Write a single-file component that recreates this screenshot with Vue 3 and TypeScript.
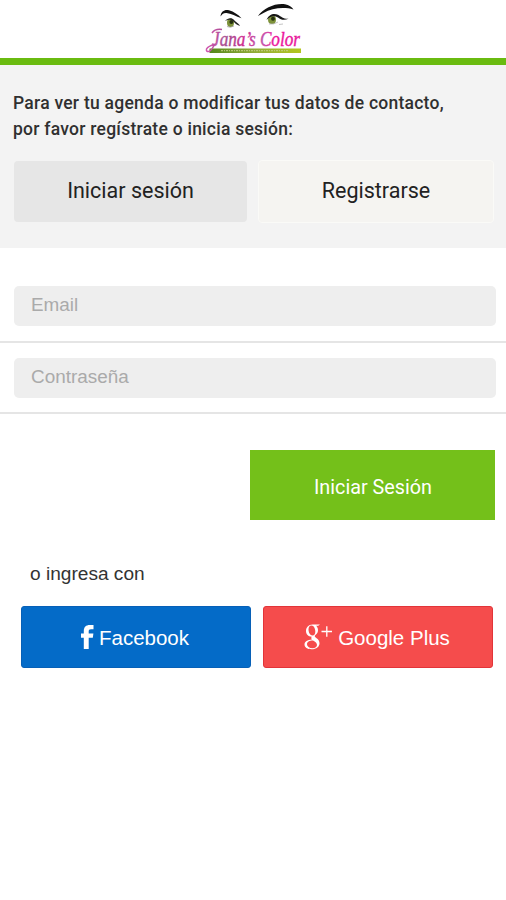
<script setup lang="ts">
import { ref } from 'vue'

const email = ref('')
const password = ref('')
</script>

<template>
  <main class="screen">
    <header class="topbar">
      <svg class="logo" width="120" height="58" viewBox="0 0 120 58" role="img" aria-label="Jana's Color">
        <defs>
          <linearGradient id="lettering" x1="12" y1="0" x2="106" y2="0" gradientUnits="userSpaceOnUse">
            <stop offset="0" stop-color="#cf55ae" />
            <stop offset="0.22" stop-color="#a34c8e" />
            <stop offset="0.42" stop-color="#d62491" />
            <stop offset="0.55" stop-color="#b764ad" />
            <stop offset="0.72" stop-color="#ed149a" />
            <stop offset="1" stop-color="#e51a9a" />
          </linearGradient>
          <linearGradient id="band" x1="0" x2="1" y1="0" y2="0">
            <stop offset="0" stop-color="#55871c" />
            <stop offset="0.5" stop-color="#91ad38" />
            <stop offset="1" stop-color="#b3c61e" />
          </linearGradient>
        </defs>
        <path d="M25.5 16.5C26 11 30 9.2 34 10.3C39 11.8 43 14.5 46.5 18.2C41 16.2 36 13.2 31.5 12.9C28 12.7 27 14.5 25.5 16.5Z" fill="#111" />
        <path d="M63 16C69 8 80 3 90 4.3C94 5 97 7 98.5 9.5C89 6.6 77 8 68.5 13Z" fill="#111" />
        <ellipse cx="35.5" cy="22.7" rx="3.5" ry="4.2" fill="#7d923a" />
        <circle cx="36.4" cy="22" r="2" fill="#26300f" />
        <path d="M30 21C33 17.5 37 17.5 39 20C41 22.5 43 22.5 45 26C41.5 25 40 23.2 38 21C35.5 19 33 19.5 30 21Z" fill="#222" />
        <path d="M32 26.5Q35 28.3 39 26" fill="none" stroke="#999" stroke-width="0.7" />
        <ellipse cx="77" cy="19.7" rx="4" ry="4.2" fill="#7d923a" />
        <circle cx="78" cy="18.8" r="2" fill="#26300f" />
        <path d="M71.5 20C74 14 79 12.8 83 14.8C86.5 16.8 88 19 93.5 18.8C89 20.8 86 19.8 83 17.5C79 15 75 16 71.5 20Z" fill="#161616" />
        <path d="M74 24Q79 24.8 83 22M84 24.5L88 24" fill="none" stroke="#aaa" stroke-width="0.7" />
        <rect x="14.5" y="48.5" width="91.5" height="4.5" fill="url(#band)" />
        <path d="M26 50.7H94" stroke="#c5cd87" stroke-width="1" stroke-dasharray="2 1 1 1" />
        <path d="M17 33Q20 28.5 27 29.5M19 45Q17 50 14 51.5Q11 52 11.5 49Q13 46 21 44" fill="none" stroke="url(#lettering)" stroke-width="1.5" />
        <text class="script" x="17" y="45.5" textLength="88" lengthAdjust="spacingAndGlyphs" fill="url(#lettering)" stroke="url(#lettering)">Jana’s Color</text>
      </svg>
    </header>

    <section class="intro">
      <p class="message">Para ver tu agenda o modificar tus datos de contacto,<br />por favor regístrate o inicia sesión:</p>
      <nav class="tabs">
        <button class="tab active" type="button">Iniciar sesión</button>
        <button class="tab" type="button">Registrarse</button>
      </nav>
    </section>

    <form class="login" @submit.prevent>
      <div class="field"><input v-model="email" type="text" placeholder="Email" /></div>
      <div class="field second"><input v-model="password" type="password" placeholder="Contraseña" /></div>
      <button class="submit" type="submit">Iniciar Sesión</button>
    </form>

    <section class="social">
      <p class="alternative">o ingresa con</p>
      <div class="providers">
        <button class="provider facebook" type="button">
          <svg width="13" height="24" viewBox="0 0 13 24" aria-hidden="true">
            <path d="M2.8 24V12.8H0V8.5H2.8V6C2.8 2 5 0 8.8 0H12.5V4.2H10C8.2 4.2 7.7 4.9 7.7 6.3V8.5H12.4L11.8 12.8H7.7V24Z" fill="#fff" />
          </svg>
          <span>Facebook</span>
        </button>
        <button class="provider google" type="button">
          <svg width="29" height="26" viewBox="0 0 29 26" fill="#fff" aria-hidden="true">
            <path fill-rule="evenodd" d="M16 .5H8.5C4.500 .5 2 3.5 2 7C2 10.3 4.3 12.6 7.7 12.7C7 13.9 7.3 14.7 8 15.5C3.5 15.6 .5 17.7 .5 20.6C.5 23.6 3.5 25.3 7.5 25.3C12.5 25.3 15.5 22.7 15.5 19.3C15.5 16.9 14.3 15.5 12.3 14C10.3 12.5 10.3 12 11.7 10.7C13.3 9.4 14 8 14 6.2C14 4.2 13.3 2.7 12 1.7H14.2ZM7.5 1.6C10 1.6 11.3 5 11.3 7.7C11.3 10 10.3 11.5 8.5 11.5C6 11.5 4.5 8.3 4.5 5.5C4.5 3.2 5.5 1.6 7.5 1.6ZM9 16.5C11.5 18 13 19 13 21C13 23 11.3 24.2 8.5 24.2C5.2 24.2 3 22.7 3 20.3C3 17.8 5.3 16.5 9 16.5Z" />
            <path d="M17.5 7.5H28M22.8 2.2V12.8" fill="none" stroke="#fff" stroke-width="1.3" />
          </svg>
          <span>Google Plus</span>
        </button>
      </div>
    </section>
  </main>
</template>

<style>
body { margin: 0; background: #fff; }
</style>

<style scoped>
* { box-sizing: border-box; }
button { margin: 0; padding: 0; border: 0; font: inherit; }
p { margin: 0; }
.screen { width: 100%; min-height: 900px; background: #fff; font-family: Roboto, sans-serif; color: #222; }
.topbar { height: 65px; border-bottom: 7px solid #6abb10; display: flex; justify-content: center; padding-left: 4px; }
.logo { display: block; flex: none; overflow: visible; }
.script { font: italic 21px "Liberation Serif", serif; stroke-width: 0.4px; }
.intro { height: 183px; padding: 25px 12px 0 13px; background: #f3f3f3; }
.message { font-size: 17.5px; font-weight: 500; line-height: 26px; letter-spacing: 0.25px; white-space: nowrap; color: #303030; }
.tabs { display: grid; grid-template-columns: 233px 236px; gap: 11px; margin-top: 18px; padding-left: 1px; }
.tab { height: 63px; padding-bottom: 2px; border: 1px solid #fafaf7; border-radius: 4px; font-size: 21.5px; color: #222; background: #f5f4f1; }
.tab.active { height: 61px; margin-top: 1px; border: 0; background: #e6e6e6; }
.login { display: flex; flex-direction: column; padding-top: 38px; }
.field { height: 57px; padding: 0 10px 0 14px; border-bottom: 2px solid #e5e5e5; }
.field.second { height: 71px; padding-top: 15px; }
input { display: block; width: 100%; height: 40px; border: 0; border-radius: 5px; padding: 0 17px 3px; background: #eee; font: 18.9px "Liberation Sans", sans-serif; outline: 0; }
input::placeholder { color: #aaa; opacity: 1; }
.submit { align-self: flex-end; width: 245px; height: 70px; margin: 36px 11px 0 0; padding: 4px 0 0 1px; background: #74c01a; color: #fff; font-size: 19.8px; }
.social { padding: 41px 14px 0 21px; font-family: "Liberation Sans", sans-serif; }
.alternative { padding-left: 9px; font-size: 19.1px; line-height: 26px; color: #333; }
.providers { display: grid; grid-template-columns: 230px 230px; gap: 12px; margin-top: 19px; }
.provider { display: flex; align-items: center; justify-content: center; height: 62px; padding-right: 2px; border-radius: 3px; color: #fff; font-size: 20.5px; }
.provider span { padding-top: 2px; }
.provider svg { flex: none; }
.facebook { gap: 5px; background: #046bc8; border: 1px solid #0760b7; }
.google { gap: 5px; background: #f54c4c; border: 1px solid #e23439; }
</style>
